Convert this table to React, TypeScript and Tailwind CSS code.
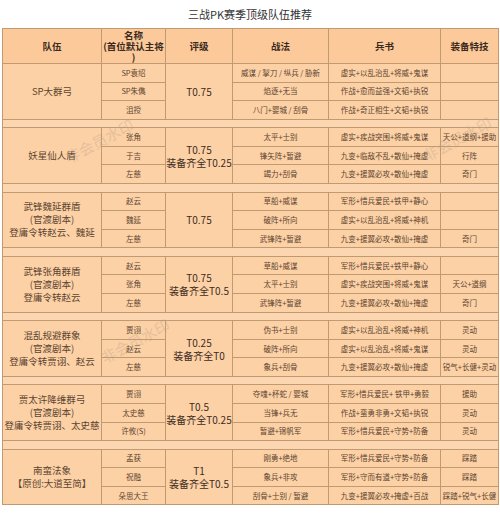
import React from 'react';

type Group = {
  team: string[];
  names: string[];
  rating: string[];
  skills: string[];
  books: string[];
  gear: string[];
};

const groups: Group[] = [
  {
    team: ['SP大群弓'],
    names: ['SP袁绍', 'SP朱儁', '沮授'],
    rating: ['T0.75'],
    skills: ['威谋 / 掣刀 / 纵兵 / 胁新', '焰逐+无当', '八门+婴城 / 刮骨'],
    books: ['虚实+以乱治乱+将威+鬼谋', '作战+愈而益强+文韬+执锐', '作战+奇正相生+文韬+执锐'],
    gear: ['', '', ''],
  },
  {
    team: ['妖星仙人盾'],
    names: ['张角', '于吉', '左慈'],
    rating: ['T0.75', '装备齐全T0.25'],
    skills: ['太平+士别', '锋矢阵+暂避', '竭力+刮骨'],
    books: ['虚实+疾战突围+将威+鬼谋', '九变+临敌不乱+散仙+掩虚', '九变+援翼必攻+散仙+掩虚'],
    gear: ['天公+道纲+援助', '行阵', '奇门'],
  },
  {
    team: ['武锋魏延群盾', '(官渡剧本)', '登庸令转赵云、魏延'],
    names: ['赵云', '魏延', '左慈'],
    rating: ['T0.75'],
    skills: ['草船+威谋', '破阵+所向', '武锋阵+暂避'],
    books: ['军形+惜兵爱民+铁甲+静心', '虚实+以乱治乱+将威+神机', '九变+援翼必攻+散仙+掩虚'],
    gear: ['', '', '奇门'],
  },
  {
    team: ['武锋张角群盾', '(官渡剧本)', '登庸令转赵云'],
    names: ['赵云', '张角', '左慈'],
    rating: ['T0.75', '装备齐全T0.5'],
    skills: ['草船+威谋', '太平+士别', '武锋阵+暂避'],
    books: ['军形+惜兵爱民+铁甲+静心', '虚实+疾战突围+将威+鬼谋', '九变+援翼必攻+散仙+掩虚'],
    gear: ['', '天公+道纲', '奇门'],
  },
  {
    team: ['混乱规避群象', '(官渡剧本)', '登庸令转贾诩、赵云'],
    names: ['贾诩', '赵云', '左慈'],
    rating: ['T0.25', '装备齐全T0'],
    skills: ['伪书+士别', '破阵+所向', '象兵+刮骨'],
    books: ['虚实+以乱治乱+将威+神机', '虚实+以乱治乱+将威+鬼谋', '九变+援翼必攻+散仙+掩虚'],
    gear: ['灵动', '灵动', '锐气+长健+灵动'],
  },
  {
    team: ['贾太许降维群弓', '(官渡剧本)', '登庸令转贾诩、太史慈'],
    names: ['贾诩', '太史慈', '许攸(S)'],
    rating: ['T0.5', '装备齐全T0.25'],
    skills: ['夺魂+杯蛇 / 婴城', '当锋+兵无', '暂避+锦帆军'],
    books: ['军形+惜兵爱民+ 铁甲+勇毅', '作战+蛮勇非勇+文韬+执锐', '军形+惜兵爱民+守势+防备'],
    gear: ['援助', '灵动', '灵动'],
  },
  {
    team: ['南蛮法象', '【原创:大道至简】'],
    names: ['孟获', '祝融', '朵思大王'],
    rating: ['T1', '装备齐全T0.5'],
    skills: ['刚勇+绝地', '象兵+非攻', '刮骨+士别 / 暂避'],
    books: ['军形+惜兵爱民+守势+防备', '军形+守而有道+守势+防备', '九变+援翼必攻+掩虚+百战'],
    gear: ['踩踏', '踩踏', '踩踏+锐气+长健'],
  },
];

const cell = 'border border-[#c29a72] text-center align-middle p-0';

// faint diagonal watermark over the table
function Watermark({ className }: { className: string }) {
  return (
    <span className={`pointer-events-none absolute text-[15px] text-[#b39a86] opacity-30 -rotate-[28deg] ${className}`}>
      非会员水印
    </span>
  );
}

export default function App() {
  return (
    <div className="relative w-[500px] h-[525px] bg-white overflow-hidden" style={{ fontFamily: '"Noto Sans CJK SC", "Noto Sans", sans-serif' }}>
      <div className="h-[28px] pt-[6px] text-center text-[11px] leading-[16px] text-[#333]">三战PK赛季顶级队伍推荐</div>
      <div className="px-[2px]">
        <table className="w-[496px] table-fixed border-collapse bg-[#fcd1a6] text-[#5c4430]">
          <colgroup>
            <col className="w-[99px]" />
            <col className="w-[64px]" />
            <col className="w-[67px]" />
            <col className="w-[96px]" />
            <col className="w-[112px]" />
            <col className="w-[58px]" />
          </colgroup>
          <thead>
            <tr className="h-[35px] bg-[#fcc99a] text-[9.5px] font-bold leading-[11px] text-[#3a2a1c]">
              <th className={cell}>队伍</th>
              <th className={cell}>
                名称
                <br />
                (首位默认主将
                <br />)
              </th>
              <th className={cell}>评级</th>
              <th className={cell}>战法</th>
              <th className={cell}>兵书</th>
              <th className={cell}>装备特技</th>
            </tr>
          </thead>
          <tbody>
            {groups.map((g, gi) => (
              <React.Fragment key={gi}>
                {g.names.map((name, ri) => (
                  <tr key={ri} className="h-[18.6px] text-[7.5px] leading-[10px]">
                    {ri === 0 && (
                      <td rowSpan={3} className={`${cell} text-[9.5px] leading-[13px]`}>
                        {g.team.map((t) => (
                          <div key={t}>{t}</div>
                        ))}
                      </td>
                    )}
                    <td className={cell}>{name}</td>
                    {ri === 0 && (
                      <td rowSpan={3} className={`${cell} whitespace-nowrap text-[10px] leading-[13px] text-[#3e2c1e]`}>
                        {g.rating.map((t) => (
                          <div key={t}>{t}</div>
                        ))}
                      </td>
                    )}
                    <td className={cell}>{g.skills[ri]}</td>
                    <td className={cell}>{g.books[ri]}</td>
                    <td className={`${cell} whitespace-nowrap`}>{g.gear[ri]}</td>
                  </tr>
                ))}
                {gi < groups.length - 1 && (
                  <tr className="h-[8.5px] bg-[#fcd6b0]">
                    <td colSpan={6} className="border border-[#c29a72] p-0" />
                  </tr>
                )}
              </React.Fragment>
            ))}
          </tbody>
        </table>
      </div>
      <Watermark className="left-[62px] top-[130px]" />
      <Watermark className="left-[420px] top-[128px]" />
      <Watermark className="left-[98px] top-[330px]" />
    </div>
  );
}
